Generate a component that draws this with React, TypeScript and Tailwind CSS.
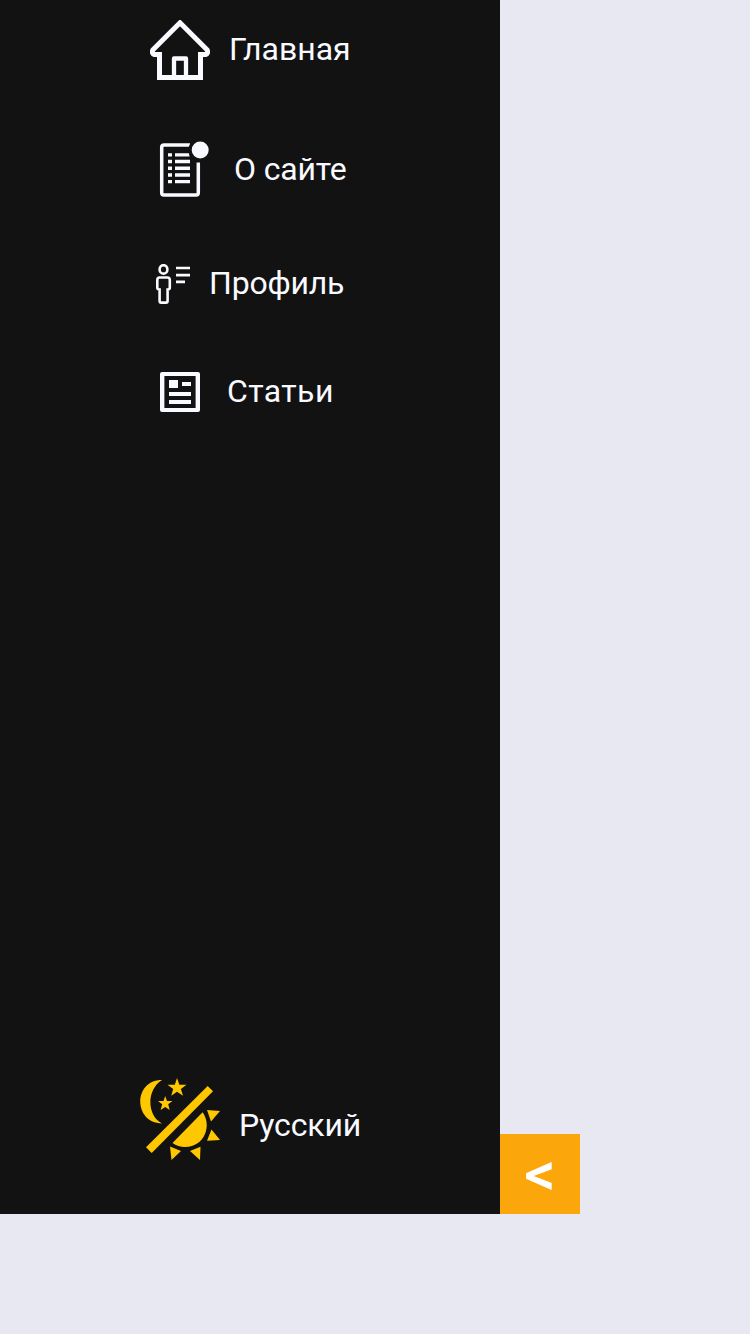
import React from "react";

function HomeIcon() {
  return (
    <svg className="h-[60px] w-[60px] shrink-0" viewBox="0 0 60 60" fill="none" stroke="#f9faff">
      <path d="M9.500 57.500V34.500H4.500Q1 33.500 3 29.800L30 2.800L57 29.800Q59 33.500 55.500 34.500H50.500V57.500Z" strokeWidth="5" strokeLinejoin="miter" />
      <path d="M24 57V38.500H36V57" strokeWidth="4.300" strokeLinejoin="round" />
    </svg>
  );
}

function NoteIcon() {
  return (
    <svg className="h-[60px] w-[60px] shrink-0" viewBox="0 0 60 60" fill="none" stroke="#f9faff">
      <path d="M40 5H14Q11.700 5 11.700 7.300V52.700Q11.700 55 14 55H46Q48.300 55 48.300 52.700V22.500" strokeWidth="3.500" />
      <path d="M18 14.900H22M18 21.500H22M18 28.300H22M18 35H22M18 41.600H22M25 14.900H39.500M25 21.500H40M25 28.300H40M25 35H40M25 41.600H40" strokeWidth="3.400" />
      <circle cx="50.200" cy="10" r="11.800" fill="#121212" stroke="none" />
      <circle cx="50.200" cy="10" r="8.500" fill="#f9faff" stroke="none" />
    </svg>
  );
}

function ProfileIcon() {
  return (
    <svg className="h-10 w-10 shrink-0" viewBox="0 0 40 40" fill="none" stroke="#f9faff" strokeWidth="2.600">
      <ellipse cx="13.500" cy="5.400" rx="3.900" ry="4.200" />
      <path d="M9.500 13.500H17.500Q19.800 13.500 19.800 16V23.500Q19.800 25.500 17.600 25.500V36.700Q17.600 38.600 16 38.600H11.200Q9.600 38.600 9.600 36.700V25.500Q7.300 25.500 7.300 23.500V16Q7.300 13.500 9.500 13.500Z" />
      <path d="M26 4H40M26 11.200H40M26 17.900H35" strokeWidth="2.700" />
    </svg>
  );
}

function ArticleIcon() {
  return (
    <svg className="h-10 w-10 shrink-0" viewBox="0 0 40 40" fill="#f9faff">
      <path fillRule="evenodd" d="M2 0H38Q40 0 40 2V38Q40 40 38 40H2Q0 40 0 38V2Q0 0 2 0ZM4.400 4V36H35.600V4Z" />
      <path d="M9 8H18V16H9ZM22 10H31V14H22ZM9 20H31V24H9ZM9 28H31V32H9Z" />
    </svg>
  );
}

function DayNightIcon() {
  return (
    <svg className="h-[82px] w-20 shrink-0" viewBox="0 0 80 82" fill="#ffc700">
      <path d="M22 2C-7 2-7 45 22 45.500C7 38 6 12 22 2Z" />
      <path d="M37 0L39.400 6.700H46.500L40.900 11L43 17.800L37 13.800L31.200 17.800L33.200 11L27.500 6.700H34.800Z" />
      <path d="M25.200 18L27 23H32.400L28.200 26.300L29.700 32L25.200 28.900L20.600 32L22.200 26.300L18 23H23.500Z" />
      <path d="M67.700 8L73 13.300L11.700 75L6 69.300Z" />
      <path d="M62.600 34.300C72 47 65 69 45 69Q38 69 32.500 65Z" />
      <path d="M67 32L80 33L71 43.500ZM71.500 51.500L80 62L67 62.800ZM30 68.500L41 73L31.500 82ZM50 73L60.500 68.700L60 82Z" />
    </svg>
  );
}

export default function App() {
  return (
    <div className="min-h-[1334px] w-[750px] bg-[#e8e8f2] font-[Roboto,sans-serif] text-[32px] leading-10 text-[#f9faff]">
      <div className="flex h-[1214px] items-end">
        <aside className="flex h-full w-[500px] flex-col justify-between bg-[#121212]">
          <nav className="flex flex-col items-start">
            <a className="flex h-20 items-start pt-5 pl-[150px]">
              <HomeIcon />
              <span className="mt-[9px] ml-[19px]">Главная</span>
            </a>
            <a className="mt-[60px] flex h-[60px] items-start pl-[150px]">
              <NoteIcon />
              <span className="mt-[9px] ml-6 tracking-[-0.150px]">О сайте</span>
            </a>
            <a className="mt-16 flex h-10 items-start pl-[150px]">
              <ProfileIcon />
              <span className="-mt-px ml-[19px] tracking-[-0.200px]">Профиль</span>
            </a>
            <a className="mt-[68px] flex h-10 items-start pl-40">
              <ArticleIcon />
              <span className="-mt-px ml-[27px] tracking-[0.400px]">Статьи</span>
            </a>
          </nav>
          <button className="mb-[54px] flex h-[82px] items-start pl-[140px]">
            <DayNightIcon />
            <span className="mt-[27px] ml-[19px] tracking-[-0.150px]">Русский</span>
          </button>
        </aside>
        <button className="flex h-20 w-20 items-center justify-center bg-[#fba60a] text-[62px] leading-[80px] font-medium text-white">
          {"<"}
        </button>
      </div>
    </div>
  );
}
